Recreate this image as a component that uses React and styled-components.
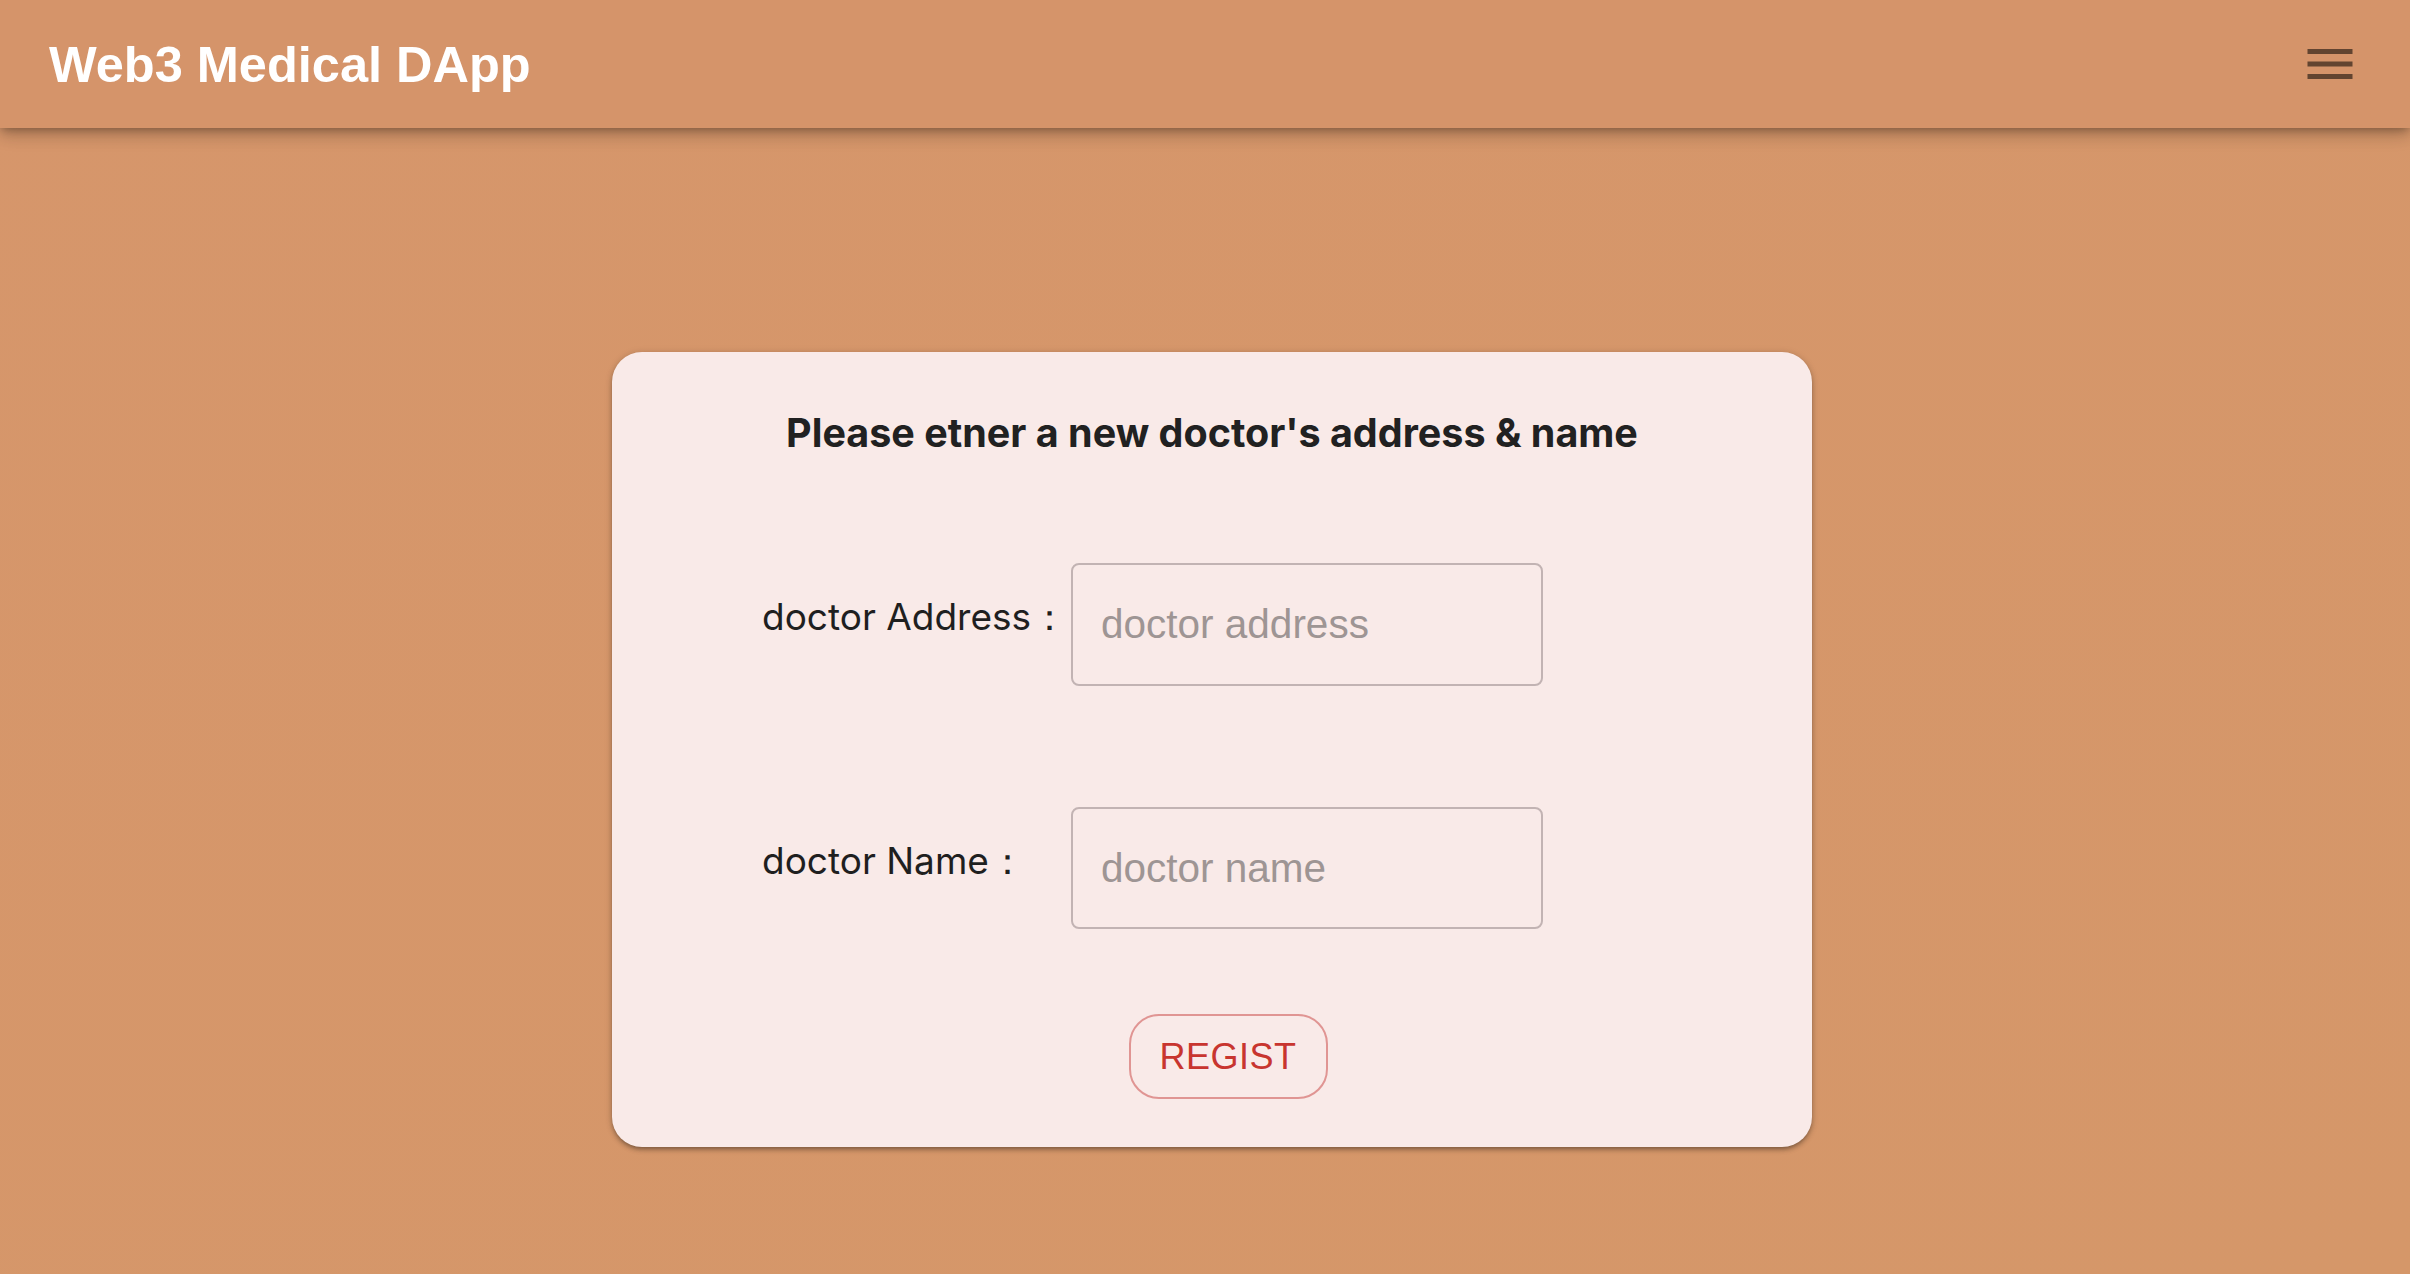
import React, { useState } from 'react';
import styled, { createGlobalStyle } from 'styled-components';

const GlobalStyle = createGlobalStyle`
  html, body {
    margin: 0;
    padding: 0;
  }
  body {
    background: #d6966a;
    font-family: Inter, "Liberation Sans", sans-serif;
  }
`;

const Page = styled.div`
  min-height: 100vh;
  background: linear-gradient(160deg, #d6966b 0%, #d59769 100%);
`;

const AppBar = styled.header`
  height: 128px;
  box-sizing: border-box;
  padding: 0 50px 0 49px;
  display: flex;
  align-items: center;
  justify-content: space-between;
  background: #d5946a;
  box-shadow: 0 4px 8px -2px rgba(0, 0, 0, 0.25), 0 8px 16px 0 rgba(0, 0, 0, 0.14),
    0 2px 20px 0 rgba(0, 0, 0, 0.1);
  position: relative;
  z-index: 1;
`;

const Brand = styled.h1`
  margin: 0;
  font-family: "Liberation Sans", Arial, sans-serif;
  font-weight: 700;
  font-size: 50.5px;
  color: #fff;
  letter-spacing: 0;
`;

const MenuButton = styled.button`
  width: 60px;
  height: 60px;
  padding: 0;
  border: 0;
  background: transparent;
  color: rgba(0, 0, 0, 0.54);
  display: flex;
  align-items: center;
  justify-content: center;
  cursor: pointer;
`;

const Main = styled.main`
  display: flex;
  justify-content: center;
  padding: 224px 0 0 14px;
`;

const Card = styled.section`
  width: 1200px;
  height: 795px;
  box-sizing: border-box;
  padding: 57px 0 48px;
  background: #f9eae8;
  border-radius: 30px;
  box-shadow: 0 3px 4px -1px rgba(0, 0, 0, 0.3), 0 2px 6px 0 rgba(0, 0, 0, 0.14),
    0 1px 10px 0 rgba(0, 0, 0, 0.08);
  display: flex;
  flex-direction: column;
`;

const Title = styled.h2`
  margin: 0;
  text-align: center;
  font-family: Inter, "Liberation Sans", sans-serif;
  font-weight: 700;
  font-size: 39.5px;
  line-height: 48px;
  color: #212121;
`;

const Form = styled.div`
  display: grid;
  grid-template-columns: 309px 472px;
  row-gap: 121px;
  padding-left: 150px;
  margin-top: 106px;
`;

const Label = styled.label`
  padding-top: 30px;
  font-family: Inter, "Liberation Sans", sans-serif;
  font-size: 37px;
  line-height: 48px;
  color: #1f1f1f;
  white-space: nowrap;
`;

const Input = styled.input`
  height: ${({ $h }) => $h}px;
  box-sizing: border-box;
  margin: 0;
  padding: 0 28px;
  border: 2px solid #c2b3b3;
  border-radius: 8px;
  background: transparent;
  font-family: "Liberation Sans", Arial, sans-serif;
  font-size: 40.5px;
  color: #212121;
  outline: none;

  &::placeholder {
    color: #9e9594;
    opacity: 1;
  }
`;

const Actions = styled.div`
  display: flex;
  justify-content: center;
  margin-top: 85px;
  padding-left: 32px;
`;

const RegistButton = styled.button`
  width: 199px;
  height: 85px;
  box-sizing: border-box;
  border: 2px solid #e09593;
  border-radius: 30px;
  background: transparent;
  color: #c8352f;
  font-family: "Liberation Sans", Arial, sans-serif;
  font-size: 36px;
  letter-spacing: 0.5px;
  cursor: pointer;
`;

const MenuIcon = () => (
  <svg width="60" height="60" viewBox="0 0 24 24" fill="currentColor">
    <path d="M3 18h18v-2H3v2zm0-5h18v-2H3v2zm0-7v2h18V6H3z" />
  </svg>
);

const App = () => {
  const [address, setAddress] = useState('');
  const [name, setName] = useState('');

  return (
    <>
      <GlobalStyle />
      <Page>
        <AppBar>
          <Brand>Web3 Medical DApp</Brand>
          <MenuButton aria-label="menu">
            <MenuIcon />
          </MenuButton>
        </AppBar>
        <Main>
          <Card>
            <Title>Please etner a new doctor's address &amp; name</Title>
            <Form>
              <Label htmlFor="doctor-address">doctor Address：</Label>
              <Input
                id="doctor-address"
                $h={123}
                placeholder="doctor address"
                value={address}
                onChange={(e) => setAddress(e.target.value)}
              />
              <Label htmlFor="doctor-name">doctor Name：</Label>
              <Input
                id="doctor-name"
                $h={122}
                placeholder="doctor name"
                value={name}
                onChange={(e) => setName(e.target.value)}
              />
            </Form>
            <Actions>
              <RegistButton>REGIST</RegistButton>
            </Actions>
          </Card>
        </Main>
      </Page>
    </>
  );
};

export default App;
